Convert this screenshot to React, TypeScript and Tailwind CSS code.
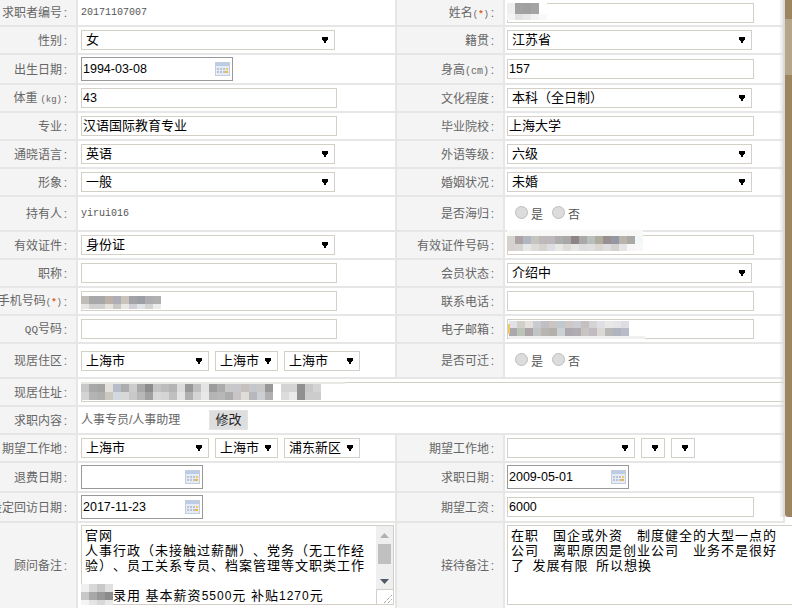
import React from "react";

const Cal = () => (
  <svg width="15" height="14" viewBox="0 0 15 14" className="shrink-0">
    <rect x="0.5" y="0.5" width="14" height="13" fill="#e6ebf4" stroke="#c4cddc" />
    <rect x="1" y="1" width="13" height="3" fill="#bccce6" />
    <g fill="#b8c3d6">
      <rect x="2" y="6" width="2" height="2" /><rect x="5" y="6" width="2" height="2" /><rect x="8" y="6" width="2" height="2" />
      <rect x="2" y="9" width="2" height="2" /><rect x="5" y="9" width="2" height="2" /><rect x="8" y="9" width="2" height="2" />
    </g>
    <rect x="11" y="6" width="2" height="2" fill="#f1c75f" />
    <rect x="10" y="9" width="3" height="2" fill="#e9b949" />
  </svg>
);

const Arrow = () => (
  <svg width="6" height="6" viewBox="0 0 6 6" className="shrink-0" shapeRendering="crispEdges">
    <path d="M0 0H6V3H5V4H4V6H2V4H1V3H0Z" fill="#000" />
  </svg>
);

type MRow = { h: number; c: string[] };
const Mosaic = ({ left, top, rows }: { left: number; top: number; rows: MRow[] }) => (
  <div className="absolute flex flex-col" style={{ left, top }}>
    {rows.map((r, i) => (
      <div key={i} className="flex" style={{ height: r.h }}>
        {r.c.map((c, j) => (
          <div key={j} className="w-[8px]" style={{ backgroundColor: c }} />
        ))}
      </div>
    ))}
  </div>
);

const Sel = ({ w, v = "" }: { w: string; v?: string }) => (
  <div className={`${w} h-[20px] shrink-0 flex items-center justify-between border border-[#d4d0c8] bg-white pl-[4px] pr-[6px] text-[13px] text-black whitespace-nowrap overflow-hidden`}>
    <span>{v}</span>
    <Arrow />
  </div>
);

const Inp = ({ w = "w-[256px]", v = "", num = false, children }: { w?: string; v?: string; num?: boolean; children?: React.ReactNode }) => (
  <div className={`${w} relative h-[20px] shrink-0 flex items-center border border-[#d4d0c8] bg-white pl-[1px] text-black whitespace-nowrap ${num ? "text-[12.5px]" : "text-[13px]"}`}>
    {v}
    {children}
  </div>
);

const DateF = ({ w, v = "" }: { w: string; v?: string }) => (
  <div className={`${w} h-[24px] shrink-0 flex items-center justify-between border border-[#999] bg-white pl-[1px] pr-[2px] text-[12.5px] text-black`}>
    <span>{v}</span>
    <Cal />
  </div>
);

const Label = ({ w, children }: { w: string; children: React.ReactNode }) => (
  <div className={`${w} shrink-0 self-stretch bg-[#f4f4f4] flex items-center justify-end pr-[7px] pt-[1px] text-[12px] text-[#666] whitespace-nowrap overflow-hidden border-r-2 border-[#e6e6e6]`}>
    <span className="shrink-0">{children}</span>
    <span className="shrink-0 w-[7px] text-center">:</span>
  </div>
);

const Latin = ({ children }: { children: React.ReactNode }) => (
  <span className="font-['Liberation_Mono',monospace] text-[10px]">{children}</span>
);
const Req = () => (
  <span className="font-['Liberation_Mono',monospace] text-[9px]">(<span className="text-[#e0601a] font-bold">*</span>)</span>
);

const Row = ({ h, l, a, b, c }: { h: string; l: React.ReactNode; a: React.ReactNode; b?: React.ReactNode; c?: React.ReactNode }) => (
  <div className={`${h} flex items-stretch border-b-2 border-[#e6e6e6]`}>
    <Label w="w-[78px]">{l}</Label>
    {b ? (
      <>
        <div className="w-[319px] shrink-0 flex items-center pl-[3px] gap-[6px] border-r-2 border-[#e6e6e6]">{a}</div>
        <Label w="w-[108px]">{b}</Label>
        <div className="flex-1 flex items-center pl-[2px] gap-[6px] border-r-2 border-[#e6e6e6]">{c}</div>
      </>
    ) : (
      <div className="flex-1 flex items-center pl-[3px]">{a}</div>
    )}
  </div>
);

const Static = ({ v }: { v: string }) => (
  <span className="font-['Liberation_Mono',monospace] text-[10px] text-[#555]">{v}</span>
);

const Radio = ({ t }: { t: string }) => (
  <span className="flex items-center gap-[3px] text-[12px] text-[#555]">
    <span className="w-[13px] h-[13px] -mt-[3px] rounded-full border border-[#bdbdbd] bg-[#dcdcdc]" />
    <span className="mt-[2px]">{t}</span>
  </span>
);

const Radios = () => (
  <div className="flex gap-[9px] pl-[8px]">
    <Radio t="是" />
    <Radio t="否" />
  </div>
);

const Dg = ({ children }: { children: React.ReactNode }) => <span className="text-[12px]">{children}</span>;

export default function App() {
  return (
    <div className="relative w-[792px] h-[608px] overflow-hidden bg-white [text-spacing-trim:space-all] font-['Liberation_Sans','Noto_Sans_CJK_SC',sans-serif]">
      <div className="w-[785px]">
        <Row h="h-[27px]" l="求职者编号" a={<Static v="20171107007" />} b={<>姓名<Req /></>} c={
          <Inp w="w-[247px]">
            <Mosaic left={-1} top={-1} rows={[
              { h: 11, c: ["#efefef", "#a2a2a2", "#a0a0a0", "#a4a4a4", "#ffffff"] },
              { h: 6, c: ["#f4f4f4", "#e2e2e2", "#e8e8e8", "#f2f2f2", "#f9f9f9"] },
            ]} />
          </Inp>
        } />
        <Row h="h-[28px]" l="性别" a={<Sel w="w-[254px]" v="女" />} b="籍贯" c={<Sel w="w-[245px]" v="江苏省" />} />
        <Row h="h-[30px]" l="出生日期" a={<DateF w="w-[152px]" v="1994-03-08" />} b={<>身高<Latin>(cm)</Latin></>} c={<Inp w="w-[247px]" v="157" num />} />
        <Row h="h-[28px]" l={<>体重<span className="ml-[3px] font-['Liberation_Mono',monospace] text-[9px]">(kg)</span></>} a={<Inp v="43" num />} b="文化程度" c={<Sel w="w-[245px]" v="本科（全日制）" />} />
        <Row h="h-[28px]" l="专业" a={<Inp v="汉语国际教育专业" />} b="毕业院校" c={<Inp w="w-[247px]" v="上海大学" />} />
        <Row h="h-[28px]" l="通晓语言" a={<Sel w="w-[254px]" v="英语" />} b="外语等级" c={<Sel w="w-[245px]" v="六级" />} />
        <Row h="h-[28px]" l="形象" a={<Sel w="w-[254px]" v="一般" />} b="婚姻状况" c={<Sel w="w-[245px]" v="未婚" />} />
        <Row h="h-[35px]" l="持有人" a={<Static v="yirui016" />} b="是否海归" c={<Radios />} />
        <Row h="h-[28px]" l="有效证件" a={<Sel w="w-[254px]" v="身份证" />} b="有效证件号码" c={
          <Inp w="w-[247px]">
            <Mosaic left={-1} top={-6} rows={[
              { h: 6, c: Array(17).fill("#f8f8f6") },
              { h: 8, c: ["#d6d2d0", "#aca4a4", "#b2b6be", "#c6c4c0", "#bdb9b9", "#bcb8bc", "#aeaeae", "#a8a8a8", "#8e8488", "#a8aaa8", "#b8c0bc", "#aeae9e", "#989090", "#9498a4", "#b8b4ac", "#aca8a8", "#f0f8f8"] },
              { h: 7, c: ["#d8d0cc", "#d4d4d0", "#e6e8e8", "#dcdcd8", "#d6d2cc", "#dcdee2", "#e8e8e4", "#dedcd8", "#e6e6e6", "#dedddd", "#e0dfdf", "#dcd6d2", "#dedee0", "#d4d2ce", "#e6e4e4", "#f6f6f6", "#f8f8f8"] },
            ]} />
          </Inp>
        } />
        <Row h="h-[28px]" l="职称" a={<Inp />} b="会员状态" c={<Sel w="w-[245px]" v="介绍中" />} />
        <Row h="h-[28px]" l={<>手机号码<Req /></>} a={
          <Inp>
            <Mosaic left={-1} top={4} rows={[
              { h: 8, c: ["#c0bcb8", "#a8a8a8", "#a8a8a8", "#bcb0a8", "#aeaeb4", "#c8c4bc", "#a2a2a8", "#9ca0a6", "#aeaeb0", "#b0b0b0"] },
              { h: 5, c: ["#e8e6e4", "#d0d0d0", "#d0d0d0", "#e8e4dc", "#c8c8c8", "#e8e8e4", "#d0d0d4", "#e0e4e8", "#d4d4d4", "#ececec"] },
            ]} />
          </Inp>
        } b="联系电话" c={<Inp w="w-[247px]" />} />
        <Row h="h-[28px]" l={<><span className="font-['Liberation_Mono',monospace] text-[11px]">QQ</span>号码</>} a={<Inp />} b="电子邮箱" c={
          <Inp w="w-[247px]">
            <div className="absolute left-0 top-[4px] w-[2px] h-[10px] bg-[#f0c860] z-10" />
            <Mosaic left={1} top={1} rows={[
              { h: 7, c: ["#e0e2e8", "#d0d0c8", "#e4e0dc", "#c8ccd0", "#c0c0c4", "#ccc4c0", "#c0c8d0", "#d0c8c4", "#ccccd4", "#c4c0c0", "#d4d4d4", "#e0e0e4", "#e8e8e4", "#e4e4e8", "#dcdee4"] },
              { h: 8, c: ["#aca8b0", "#bcc4b8", "#aca4a8", "#c0c4c4", "#b8b4b0", "#b4b0ac", "#ccd2d4", "#aca8b0", "#b0acb0", "#c8c4c4", "#c0bcc0", "#dcd8d4", "#b8b8b8", "#b0b4c0", "#b8bcc8"] },
              { h: 3, c: Array(17).fill("#f0f0ee") },
            ]} />
          </Inp>
        } />
        <Row h="h-[35px]" l="现居住区" a={<><Sel w="w-[128px]" v="上海市" /><Sel w="w-[63px]" v="上海市" /><Sel w="w-[76px]" v="上海市" /></>} b="是否可迁" c={<Radios />} />
        <Row h="h-[28px]" l="现居住址" a={
          <Inp w="w-[720px]">
            <Mosaic left={-1} top={-1} rows={[
              { h: 2, c: Array(33).fill("#e8e8e4") },
              { h: 8, c: ["#c8c8c8", "#a8a8a8", "#a4a4a4", "#e4e0dc", "#b8bcc8", "#acacac", "#cccccc", "#a8a8a8", "#8c8c8c", "#c4c4c4", "#bcbcbc", "#b4b4b4", "#dcdcdc", "#989898", "#c0c0c0", "#e4e4e4", "#9c9c9c", "#acacac", "#c8c8c8", "#c8c8cc", "#c8c0bc", "#c4c8cc", "#c8c8c8", "#989898", "#ffffff", "#d4d4d4", "#d4d4d4", "#909090", "#c8c8c8", "#d4d4d4"] },
              { h: 8, c: ["#d4d4d4", "#b4b4b4", "#b0b0b0", "#ccc8c0", "#d4d8e0", "#d8d8d8", "#c8c8c8", "#b8b8b8", "#a0a0a0", "#d8d8d8", "#d4d4d4", "#c0c0c0", "#e4e4e4", "#b0b0b0", "#d4d4d4", "#e8e8e8", "#b4b4b4", "#b8b8b8", "#acacac", "#c8c4c8", "#e0dcd8", "#b8b8bc", "#ccd0d4", "#b0b0b0", "#ffffff", "#dcdcdc", "#eaeaea", "#909090", "#cccccc", "#cccccc"] },
            ]} />
          </Inp>
        } />
        <Row h="h-[28px]" l="求职内容" a={
          <div className="flex items-center">
            <span className="w-[128px] text-[12px] text-[#666]">人事专员/人事助理</span>
            <span className="w-[39px] h-[20px] flex items-center justify-center bg-[#dedede] border border-[#e4e4e4] text-[13px] text-[#222]">修改</span>
          </div>
        } />
        <Row h="h-[28px]" l="期望工作地" a={<><Sel w="w-[128px]" v="上海市" /><Sel w="w-[63px]" v="上海市" /><Sel w="w-[76px]" v="浦东新区" /></>} b="期望工作地" c={<><Sel w="w-[128px]" /><Sel w="w-[24px]" /><Sel w="w-[24px]" /></>} />
        <Row h="h-[30px]" l="退费日期" a={<DateF w="w-[122px]" />} b="求职日期" c={<DateF w="w-[122px]" v="2009-05-01" />} />
        <Row h="h-[30px]" l="设定回访日期" a={<DateF w="w-[122px]" v="2017-11-23" />} b="期望工资" c={<Inp w="w-[247px]" v="6000" num />} />
        <div className="h-[85px] flex items-stretch">
          <Label w="w-[78px]">顾问备注</Label>
          <div className="w-[319px] shrink-0 flex items-start pl-[3px] pt-[2px] border-r-2 border-[#e6e6e6]">
            <div className="relative w-[313px] h-[80px] border border-[#d4d0c8] bg-white flex">
              <div className="flex-1 pl-[3px] pt-[2px] text-[13px] leading-[15px] tracking-[1px] text-black whitespace-pre overflow-hidden">
                <div>官网</div>
                <div>人事行政（未接触过薪酬）、党务（无工作经</div>
                <div>验）、员工关系专员、档案管理等文职类工作</div>
                <div> </div>
                <div>　　录用 基本薪资<Dg>5500</Dg>元 补贴<Dg>1270</Dg>元</div>
              </div>
              <Mosaic left={-1} top={58} rows={[
                { h: 8, c: ["#f0f0f0", "#d8d8d8", "#c8c8c8", "#e0e0e0"] },
                { h: 8, c: ["#c8c8c8", "#a8a8a8", "#989898", "#8c8c8c"] },
                { h: 5, c: ["#f4f4f4", "#e4e4e4", "#d8d8d8", "#e8e8e8"] },
              ]} />
              <div className="w-[17px] shrink-0 flex flex-col bg-[#efefef]">
                <div className="h-[18px] flex items-center justify-center">
                  <svg width="9" height="5" viewBox="0 0 9 5"><path d="M4.5 0L9 5H0Z" fill="#b0b0b0" /></svg>
                </div>
                <div className="mx-[2px] h-[20px] bg-[#c0c0c0]" />
                <div className="h-[25px] flex items-end justify-center pb-[5px]">
                  <svg width="9" height="5" viewBox="0 0 9 5"><path d="M0 0H9L4.5 5Z" fill="#505a66" /></svg>
                </div>
                <div className="flex-1 bg-white border-t border-l border-[#d4d0c8] flex items-end justify-end p-[1px]">
                  <svg width="8" height="8" viewBox="0 0 8 8"><path d="M0 8L8 0M4 8L8 4" stroke="#777" strokeDasharray="1 1" /></svg>
                </div>
              </div>
            </div>
          </div>
          <Label w="w-[108px]">接待备注</Label>
          <div className="flex-1 flex items-start pl-[2px] pt-[2px]">
            <div className="w-[290px] h-[80px] shrink-0 border border-[#d4d0c8] bg-white pl-[3px] pt-[2px] text-[13px] leading-[15px] tracking-[1px] text-black whitespace-pre">
              <div>在职　国企或外资　制度健全的大型一点的</div>
              <div>公司　离职原因是创业公司　业务不是很好</div>
              <div>了{"\u2002"}发展有限{"\u2002"}所以想换</div>
            </div>
          </div>
        </div>
      </div>

      <div className="absolute right-0 top-0 w-[7px] h-[517px] rounded-bl-[3px] bg-[#9c8560] flex flex-col pt-[19px]">
        <div className="h-[56px] bg-[#b5a68a]" />
      </div>
      <div className="absolute right-[7px] top-0 w-[6px] h-[517px] bg-gradient-to-r from-transparent to-[#d8d8d8]" />
    </div>
  );
}
